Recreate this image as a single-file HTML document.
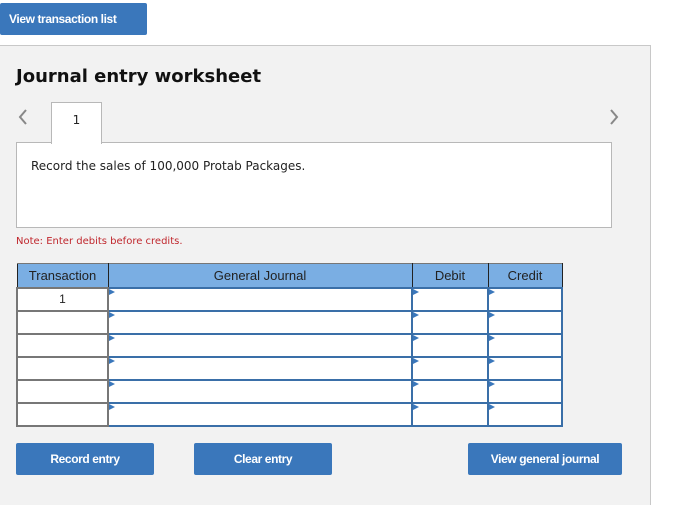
<!DOCTYPE html>
<html><head><meta charset="utf-8"><style>
*{box-sizing:border-box;margin:0;padding:0}
body{width:684px;height:499px;background:#fff;position:relative;overflow:hidden;font-family:"Liberation Sans",Arial,sans-serif}
.a{position:absolute}
.btn{position:absolute;background:#3a77bb;color:#fff;font-weight:bold;font-size:12px;letter-spacing:-0.4px;text-align:center;border-radius:2px}
.panel{left:0;top:45px;width:651px;height:460px;background:#f2f2f2;border-top:1px solid #c8c8c8;border-right:1px solid #c8c8c8}
.title{left:16px;top:66px;font-family:"DejaVu Sans",Verdana,sans-serif;font-weight:bold;font-size:18px;color:#111}
.tab{left:51px;top:102px;width:51px;height:42px;background:#fff;border:1px solid #b8b8b8;border-bottom:none;font-family:"DejaVu Sans",Verdana,sans-serif;font-size:12px;text-align:center;padding-top:10px;z-index:2;color:#222}
.box{left:16px;top:142px;width:596px;height:86px;background:#fff;border:1px solid #b8b8b8}
.txt{left:31px;top:159px;font-family:"DejaVu Sans",Verdana,sans-serif;font-size:12px;color:#222}
.note{left:16px;top:235px;font-family:"DejaVu Sans",Verdana,sans-serif;font-size:10px;color:#c0272d}
table{position:absolute;left:16px;top:263px;border-collapse:collapse;font-size:13px}
th{background:#7aaee3;height:24px;font-weight:normal;color:#222;border:1px solid #222;border-top:1px solid #777}
td{height:23px;background:#fff;border:2px solid #777;padding:0;position:relative}
td.i{border:2px solid #3a6fa8}
td.i:before{content:"";position:absolute;left:0;top:0;border-left:6px solid #3a77bb;border-top:3px solid transparent;border-bottom:3px solid transparent}
td.t{text-align:center;color:#222;font-size:12px}
</style></head><body>
<div class="btn" style="left:0;top:3px;width:147px;height:32px;line-height:32px;text-align:left;padding-left:9px">View transaction list</div>
<div class="a panel"></div>
<div class="a title">Journal entry worksheet</div>
<svg class="a" style="left:17px;top:108px" width="12" height="18"><path d="M9 2 L3 9 L9 16" stroke="#888" stroke-width="2" fill="none"/></svg>
<svg class="a" style="left:608px;top:108px" width="12" height="18"><path d="M3 2 L9 9 L3 16" stroke="#888" stroke-width="2" fill="none"/></svg>
<div class="a tab">1</div>
<div class="a box"></div>
<div class="a txt">Record the sales of 100,000 Protab Packages.</div>
<div class="a note" style="top:236px">Note: Enter debits before credits.</div>
<table>
<tr><th style="width:91px">Transaction</th><th style="width:304px">General Journal</th><th style="width:76px">Debit</th><th style="width:74px">Credit</th></tr>
<tr><td class="t">1</td><td class="i"></td><td class="i"></td><td class="i"></td></tr>
<tr><td class="t"></td><td class="i"></td><td class="i"></td><td class="i"></td></tr>
<tr><td class="t"></td><td class="i"></td><td class="i"></td><td class="i"></td></tr>
<tr><td class="t"></td><td class="i"></td><td class="i"></td><td class="i"></td></tr>
<tr><td class="t"></td><td class="i"></td><td class="i"></td><td class="i"></td></tr>
<tr><td class="t"></td><td class="i"></td><td class="i"></td><td class="i"></td></tr>
</table>
<div class="btn" style="left:16px;top:443px;width:138px;height:32px;line-height:32px">Record entry</div>
<div class="btn" style="left:194px;top:443px;width:138px;height:32px;line-height:32px">Clear entry</div>
<div class="btn" style="left:468px;top:443px;width:154px;height:32px;line-height:32px">View general journal</div>
</body></html>
